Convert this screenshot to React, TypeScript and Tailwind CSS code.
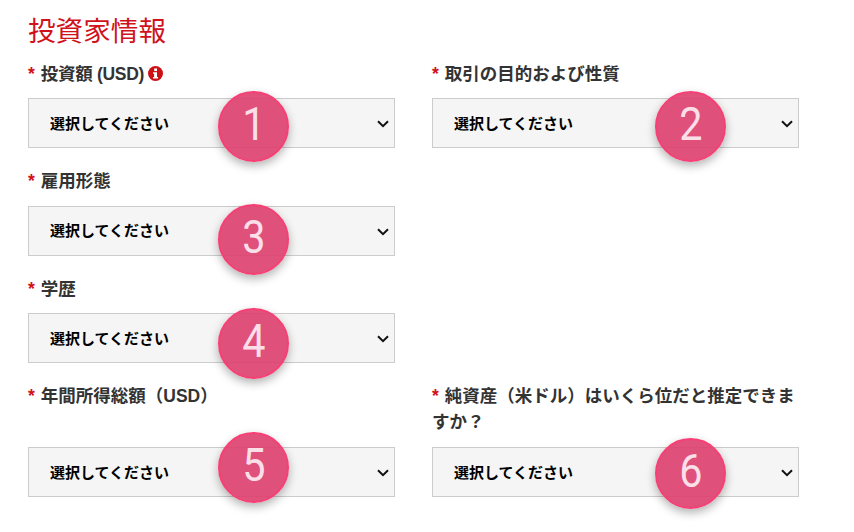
const font = { fontFamily: '"Liberation Sans", "Noto Sans CJK JP", sans-serif' };

function Field({ label, n, x, y, info, tall }: { label: string; n: number; x: number; y: number; info?: boolean; tall?: boolean }) {
  return (
    <div className="w-[367px]">
      <div className={`text-[#333333] text-[17.5px] font-bold leading-[26.4px] ${tall ? "h-[64px]" : "h-[37.5px]"}`}>
        <span className="text-[#d0121b] mr-[6px]">*</span>
        <span className={info ? "tracking-[-0.3px]" : ""}>{label}</span>
        {info && (
          <svg viewBox="0 0 16 16" className="inline-block w-[15px] h-[15px] ml-[4px] align-[-1px]">
            <circle cx="8" cy="8" r="8" fill="#cc1016" />
            <rect x="6.6" y="2.6" width="3" height="2.8" fill="#fff" />
            <path d="M5.4 6.6h4.2v5h1.1v1.7H5.4v-1.7h1.1V8.3H5.4z" fill="#fff" />
          </svg>
        )}
      </div>
      <div className="relative">
        <select className="appearance-none w-full h-[50px] border border-[#cccccc] bg-[#f5f5f5] pl-[21px] pr-[4px] pt-[2px] text-[15px] font-bold text-black rounded-none" style={font}>
          <option>選択してください</option>
        </select>
        <svg viewBox="0 0 12 8" className="absolute right-[6px] top-[22px] w-[12px] h-[8px] pointer-events-none" fill="none" stroke="#111" strokeWidth="2">
          <path d="M1 1.2l5 5 5-5" />
        </svg>
        <div
          className="absolute w-[71px] h-[71px] rounded-full bg-[#dd3f6d]/90 border-2 border-[#f73f75] shadow-[0_4px_10px_rgba(0,0,0,0.3)] flex items-center justify-center pb-[5px] text-[#fbdfe8] text-[46px] leading-none font-normal"
          style={{ left: x, top: y, fontFamily: '"Roboto", sans-serif' }}
        >
          <span className="scale-x-90">{n}</span>
        </div>
      </div>
    </div>
  );
}

export default function App() {
  return (
    <div className="w-[854px] h-[532px] bg-white pl-[28px] pt-[12px] overflow-hidden" style={font}>
      <h2 className="text-[#d0121b] text-[27.6px] leading-[40px] font-normal h-[48.5px]">投資家情報</h2>
      <div className="grid grid-cols-[367px_367px] gap-x-[37px] gap-y-[20px]">
        <Field label="投資額 (USD)" n={1} x={190} y={-7} info />
        <Field label="取引の目的および性質" n={2} x={223} y={-7} />
        <div className="col-start-1"><Field label="雇用形態" n={3} x={190} y={-2} /></div>
        <div className="col-start-1"><Field label="学歴" n={4} x={190} y={-5} /></div>
        <div className="col-start-1"><Field label="年間所得総額（USD）" n={5} x={190} y={-15} tall /></div>
        <Field label="純資産（米ドル）はいくら位だと推定できますか？" n={6} x={223} y={-9} tall />
      </div>
    </div>
  );
}
